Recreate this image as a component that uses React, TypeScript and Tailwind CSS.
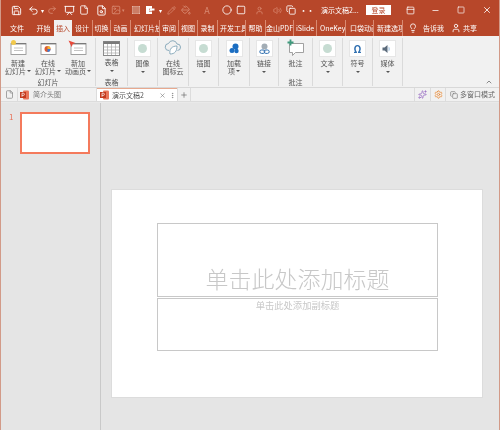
import React from "react";
import { Save, Undo2, Redo2, File, FileSearch, Image, Circle, Lightbulb, User, Minus, Square, X, Pencil, PaintBucket, Volume2, Copy, Plus, ChevronUp, EllipsisVertical, Settings, Sparkles, Presentation, PanelTop } from "lucide-react";

const tabs = [
  { t: "文件", c: "w-[32px] justify-center" },
  { t: "开始", c: "w-[21px] justify-center" },
  { t: "插入", c: "w-[18px] justify-center bg-[#f1f1f1] text-[#b7472a]" },
  { t: "设计", c: "w-[21px] justify-center border-r" },
  { t: "切换", c: "w-[18px] justify-center border-r" },
  { t: "动画", c: "w-[20px] justify-center border-r" },
  { t: "幻灯片放映", c: "w-[29px] pl-[3px] border-r" },
  { t: "审阅", c: "w-[19px] justify-center border-r" },
  { t: "视图", c: "w-[19px] justify-center border-r" },
  { t: "录制", c: "w-[20px] justify-center border-r" },
  { t: "开发工具", c: "w-[28px] pl-[2px] border-r" },
  { t: "帮助", c: "w-[20px] justify-center border-r" },
  { t: "金山PDF", c: "w-[28px] justify-center border-r" },
  { t: "iSlide", c: "w-[23px] justify-center border-r" },
  { t: "OneKey", c: "w-[29px] pl-[3px] border-r" },
  { t: "口袋动画", c: "w-[28px] pl-[4px] border-r" },
  { t: "新建选项卡", c: "w-[29px] pl-[3px] border-r" },
];

function Cell({ c, children }: { c: string; children?: React.ReactNode }) {
  return <div className={`shrink-0 flex items-center justify-center ${c}`}>{children}</div>;
}

function Qat() {
  const dim = "text-[#d98a72]";
  return (
    <div className="flex items-center h-[20px] bg-[#b7472a] text-white">
      <Cell c="w-[16px] ml-[7px]"><Save size={11} /></Cell>
      <Cell c="w-[14px] ml-[2px]"><Undo2 size={11} /></Cell>
      <Cell c="w-[4px] text-[6px]">▾</Cell>
      <Cell c="w-[14px] ml-px"><Redo2 size={10} className={dim} /></Cell>
      <Cell c="w-[14px] ml-[3px]"><Presentation size={11} /></Cell>
      <Cell c="w-[14px] ml-px"><File size={10} /></Cell>
      <Cell c="w-[14px] ml-[3px]"><FileSearch size={11} /></Cell>
      <Cell c="w-[12px] ml-[2px]"><Image size={10} className={dim} /></Cell>
      <Cell c="w-[3px] text-[5px] text-[#d98a72]">▾</Cell>
      <Cell c="w-[14px] ml-[4px]">
        <svg width="8" height="8" viewBox="0 0 8 8">
          <rect width="8" height="8" fill="#e3b5a6" />
          <path d="M0 2h8M0 4h8M0 6h8M2 0v8M4 0v8M6 0v8" stroke="#b7472a" strokeWidth="0.6" />
        </svg>
      </Cell>
      <Cell c="w-[14px]">
        <svg width="10" height="10" viewBox="0 0 10 10">
          <rect x="1" y="1" width="6" height="8" fill="#fff" />
          <path d="M4 4.2h5.5L7.5 2.5M4 6.2h3" stroke="#b7472a" strokeWidth="0.8" fill="none" />
          <path d="M5 3.5h4.5v2H5z" fill="#fff" />
        </svg>
      </Cell>
      <Cell c="w-[6px] text-[6px]">▾</Cell>
      <Cell c="w-[14px] ml-px"><Pencil size={9} className={dim} /></Cell>
      <Cell c="w-[14px] ml-px"><PaintBucket size={10} className={dim} /></Cell>
      <Cell c="w-[14px] ml-[7px] text-[9px] leading-none text-[#d98a72]">A</Cell>
      <Cell c="w-[14px] ml-[6px]"><Circle size={10} /></Cell>
      <Cell c="w-[14px]"><Square size={10} /></Cell>
      <Cell c="w-[14px] ml-[4px]"><User size={9} className={dim} /></Cell>
      <Cell c="w-[14px] ml-[4px]"><Volume2 size={9} className={dim} /></Cell>
      <Cell c="w-[14px]"><Copy size={10} /></Cell>
      <Cell c="w-[10px] ml-[4px] text-[7px] font-bold leading-none">··</Cell>
      <Cell c="w-[40px] ml-[9px] justify-start! text-[7px] whitespace-nowrap">演示文稿2...</Cell>
      <Cell c="w-[25px] h-[10px] ml-[5px] bg-white text-[#b7472a] text-[7px]">登录</Cell>
      <Cell c="w-[14px] ml-[12px]"><PanelTop size={9} /></Cell>
      <Cell c="w-[14px] ml-[11px]"><Minus size={9} /></Cell>
      <Cell c="w-[14px] ml-[12px]"><Square size={8} /></Cell>
      <Cell c="w-[14px] ml-[12px]"><X size={10} /></Cell>
    </div>
  );
}

function Tabs() {
  return (
    <div className="flex items-stretch h-[16px] bg-[#b7472a] text-white text-[7px] leading-none">
      {tabs.map((x) => (
        <div key={x.t} className={`flex items-center overflow-hidden whitespace-nowrap border-[#d98a72] ${x.c}`}>
          {x.t}
        </div>
      ))}
      <div className="flex items-center">
        <Lightbulb size={10} className="ml-[5px]" />
        <span className="ml-[5px] w-[22px] whitespace-nowrap">告诉我</span>
        <User size={10} className="ml-[6px]" />
        <span className="ml-[2px]">共享</span>
      </div>
    </div>
  );
}

function Caret() {
  return <span className="block w-0 h-0 border-x-[2px] border-t-[2px] border-x-transparent border-t-[#555]" />;
}

function Box({ children }: { children?: React.ReactNode }) {
  return (
    <div className="w-[17px] h-[17px] bg-white border border-[#e6e6e6] flex items-center justify-center">
      {children ?? <span className="block w-[9px] h-[9px] rounded-full bg-[#c6dcd2]" />}
    </div>
  );
}

function BoxBtn({ lines, children, caretInline }: { lines: string[]; children?: React.ReactNode; caretInline?: boolean }) {
  return (
    <div className="flex flex-col items-center pt-[2px] text-[7px] leading-[8px] text-[#555]">
      <Box>{children}</Box>
      <div className="mt-[2px] whitespace-nowrap">{lines[0]}</div>
      {caretInline ? (
        <div className="flex items-center gap-[1px] whitespace-nowrap">{lines[1]}<Caret /></div>
      ) : (
        <div className="mt-[4px]"><Caret /></div>
      )}
    </div>
  );
}

function SlideIcon({ kind }: { kind: "new" | "online" | "add" }) {
  return (
    <svg width="17" height="16" viewBox="0 0 17 16">
      <rect x="1" y="3.5" width="15" height="11" fill="#fff" stroke="#8a8a8a" strokeWidth="0.8" />
      <rect x="1" y="3" width="15" height="1.4" fill="#7a7a7a" />
      {kind === "new" && <circle cx="3.5" cy="2.5" r="2.5" fill="#f2c94c" />}
      {kind === "online" && (
        <>
          <circle cx="7.5" cy="9" r="3" fill="#d95b35" />
          <path d="M7.5 9V6a3 3 0 0 1 3 3z" fill="#f2b233" />
          <path d="M7.5 9h3a3 3 0 0 1-3 3z" fill="#3b7dd8" />
        </>
      )}
      {kind !== "online" && <path d="M4 8h9M4 10.5h9" stroke="#b5b5b5" strokeWidth="0.8" />}
    </svg>
  );
}

function BigBtn({ kind, a, b }: { kind: "new" | "online" | "add"; a: string; b: string }) {
  return (
    <div className="w-[30px] flex flex-col items-center pt-[2px] text-[7px] leading-[8px] text-[#555] whitespace-nowrap">
      <SlideIcon kind={kind} />
      <div className="mt-[3px]">{a}</div>
      <div className="flex items-center gap-[1px]">{b}<Caret /></div>
    </div>
  );
}

function Group({ w, label, children }: { w: string; label?: string; children: React.ReactNode }) {
  return (
    <div className={`${w} shrink-0 flex flex-col items-stretch border-r border-[#dadada] mt-[2px] mb-px`}>
      <div className="flex-1 flex justify-center">{children}</div>
      <div className="h-[8px] text-[7px] leading-[8px] text-[#555] text-center">{label}</div>
    </div>
  );
}

function Ribbon() {
  return (
    <div className="relative flex h-[52px] bg-[#f1f1f1] border-b border-[#d8d8d8]">
      <Group w="w-[95px]" label="幻灯片">
        <BigBtn kind="new" a="新建" b="幻灯片" />
        <BigBtn kind="online" a="在线" b="幻灯片" />
        <BigBtn kind="add" a="新加" b="动画页" />
      </Group>
      <Group w="w-[32px]" label="表格">
        <div className="flex flex-col items-center pt-[3px] text-[7px] leading-[8px] text-[#555]">
          <svg width="17" height="15" viewBox="0 0 17 15">
            <rect x="0.5" y="0.5" width="16" height="14" fill="#fff" stroke="#8a8a8a" />
            <rect x="0.5" y="0.5" width="16" height="2.5" fill="#7a7a7a" />
            <path d="M0.5 6h16M0.5 9h16M0.5 12h16M4.5 3v11M8.5 3v11M12.5 3v11" stroke="#a8a8a8" strokeWidth="0.7" />
          </svg>
          <div className="mt-[2px]">表格</div>
          <div className="mt-[4px]"><Caret /></div>
        </div>
      </Group>
      <Group w="w-[30px]"><BoxBtn lines={["图像"]} /></Group>
      <Group w="w-[31px]">
        <div className="flex flex-col items-center pt-px text-[7px] leading-[8px] text-[#555] whitespace-nowrap">
          <svg width="18" height="17" viewBox="0 0 18 17" fill="none">
            <path d="M5 11.5a3.5 3.5 0 0 1-.5-7A4.5 4.5 0 0 1 13 5a3.2 3.2 0 0 1 .5 6.5" stroke="#7fa3b5" strokeWidth="0.9" />
            <path d="M6 15c-1-5 2-8 7-8 0 5-2 8-7 8z" fill="#fff" stroke="#7fa3b5" strokeWidth="0.9" />
          </svg>
          <div className="mt-[3px]">在线</div>
          <div>图标云</div>
        </div>
      </Group>
      <Group w="w-[30px]"><BoxBtn lines={["插图"]} /></Group>
      <Group w="w-[31px]">
        <BoxBtn lines={["加载", "项"]} caretInline>
          <svg width="11" height="11" viewBox="0 0 11 11">
            <circle cx="6.5" cy="3.5" r="3" fill="#1b6ec2" />
            <circle cx="3" cy="7.5" r="2.5" fill="#1b6ec2" />
            <circle cx="7.5" cy="8" r="2.2" fill="#1b6ec2" />
          </svg>
        </BoxBtn>
      </Group>
      <Group w="w-[29px]">
        <BoxBtn lines={["链接"]}>
          <svg width="11" height="12" viewBox="0 0 11 12" fill="none">
            <circle cx="5.5" cy="3.5" r="3" fill="#a3adb5" />
            <rect x="0.8" y="7" width="5" height="3.4" rx="1.7" stroke="#2f6fb0" strokeWidth="1" />
            <rect x="5.2" y="7" width="5" height="3.4" rx="1.7" stroke="#2f6fb0" strokeWidth="1" />
          </svg>
        </BoxBtn>
      </Group>
      <Group w="w-[34px]" label="批注">
        <div className="flex flex-col items-center pt-px text-[7px] leading-[8px] text-[#555]">
          <svg width="18" height="18" viewBox="0 0 18 18" fill="none">
            <path d="M2.5 4.5h14v9h-8l-3 3v-3h-3z" fill="#fff" stroke="#8a8a8a" strokeWidth="0.8" />
            <path d="M3.5 0.5v6M0.5 3.5h6" stroke="#3f9a7d" strokeWidth="1.8" />
          </svg>
          <div className="mt-[2px]">批注</div>
        </div>
      </Group>
      <Group w="w-[30px]"><BoxBtn lines={["文本"]} /></Group>
      <Group w="w-[30px]">
        <BoxBtn lines={["符号"]}><span className="text-[10px] leading-none font-bold text-[#2f6fb0]">Ω</span></BoxBtn>
      </Group>
      <Group w="w-[30px]">
        <BoxBtn lines={["媒体"]}>
          <svg width="11" height="10" viewBox="0 0 11 10">
            <path d="M0.5 3.5h2l3-2.5v8l-3-2.5h-2z" fill="#5b6b7b" />
            <path d="M6.5 2.5a3 3 0 0 1 0 5z" fill="#a9c8e4" />
          </svg>
        </BoxBtn>
      </Group>
      <div className="flex-1 flex items-end justify-end pr-[6px] pb-[1px]">
        <ChevronUp size={8} className="text-[#555]" />
      </div>
      <svg className="absolute left-[67px] top-[4px]" width="8" height="8" viewBox="0 0 8 8">
        <path d="M0.5 0.5l7 2.6-2.8 1 -1 2.9z" fill="#e8493a" />
      </svg>
    </div>
  );
}

function PptIcon() {
  return (
    <svg width="9" height="10" viewBox="0 0 9 10">
      <rect x="3" y="0.5" width="6" height="9" rx="1" fill="#e8755a" />
      <rect x="0" y="2" width="6" height="6" fill="#c4391d" />
      <path d="M2 6.8V3.2h1.3a1 1 0 0 1 0 2.2H2" stroke="#fff" strokeWidth="0.7" fill="none" />
    </svg>
  );
}

function DocTabs() {
  return (
    <div className="flex items-stretch h-[14px] bg-[#f1f1f1] border-b border-[#dcdcdc] text-[7px] text-[#777] leading-none shrink-0">
      <div className="w-[17px] flex items-center justify-center border-r border-[#dcdcdc]">
        <File size={9} className="text-[#888]" />
      </div>
      <div className="w-[79px] flex items-center pl-[2px] gap-[4px] border-r border-[#dcdcdc]">
        <PptIcon />
        <span>简介头图</span>
      </div>
      <div className="w-[80px] flex items-center pl-[3px] gap-[3px] bg-white border-t border-[#e8a98f] text-[#555]">
        <PptIcon />
        <span className="w-[44px]">演示文稿2</span>
        <X size={7} className="text-[#777]" />
        <EllipsisVertical size={7} className="text-[#777]" />
      </div>
      <div className="w-[14px] flex items-center justify-center border-x border-[#dcdcdc]">
        <Plus size={8} className="text-[#666]" />
      </div>
      <div className="flex-1" />
      <div className="w-[16px] flex items-center justify-center border-l border-[#dcdcdc]">
        <Sparkles size={9} className="text-[#9b6fc4]" />
      </div>
      <div className="w-[15px] flex items-center justify-center border-l border-[#dcdcdc]">
        <Settings size={9} className="text-[#e8842c]" />
      </div>
      <div className="w-[54px] flex items-center pl-[4px] gap-[2px] border-l border-[#dcdcdc] whitespace-nowrap text-[#666]">
        <Copy size={8} className="text-[#777]" />
        <span>多窗口模式</span>
      </div>
    </div>
  );
}

function Main() {
  return (
    <div className="flex-1 flex bg-[#e5e5e5] border-t border-[#e9e9e9] min-h-0">
      <div className="w-[100px] shrink-0 border-r border-[#c9c9c9] flex items-start pt-[9px]">
        <span className="w-[19px] pl-[8px] text-[8px] leading-[10px] text-[#e8735a]">1</span>
        <div className="w-[70px] h-[42px] bg-white border-2 border-[#f47a5c]" />
      </div>
      <div className="flex-1 pt-[86px] pl-[10px]">
        <div className="w-[372px] h-[209px] bg-white border border-[#dcdcdc] pt-[33px] pl-[45px]">
          <div className="w-[281px] h-[74px] border border-[#c8c8c8] flex items-end justify-center">
            <span className="text-[23px] leading-[30px] mb-[3px] text-[#c8c8c8] font-light whitespace-nowrap">单击此处添加标题</span>
          </div>
          <div className="w-[281px] h-[53px] mt-px border border-[#c8c8c8] flex justify-center">
            <span className="text-[9.3px] leading-[13px] text-[#c8c8c8] whitespace-nowrap">单击此处添加副标题</span>
          </div>
        </div>
      </div>
    </div>
  );
}

export default function App() {
  return (
    <div className="w-[500px] h-[430px] flex flex-col overflow-hidden border-x border-[#d29a88] bg-[#e5e5e5] blur-[0.3px] font-['Noto_Sans_CJK_SC','Liberation_Sans',sans-serif]">
      <Qat />
      <Tabs />
      <Ribbon />
      <DocTabs />
      <Main />
    </div>
  );
}
